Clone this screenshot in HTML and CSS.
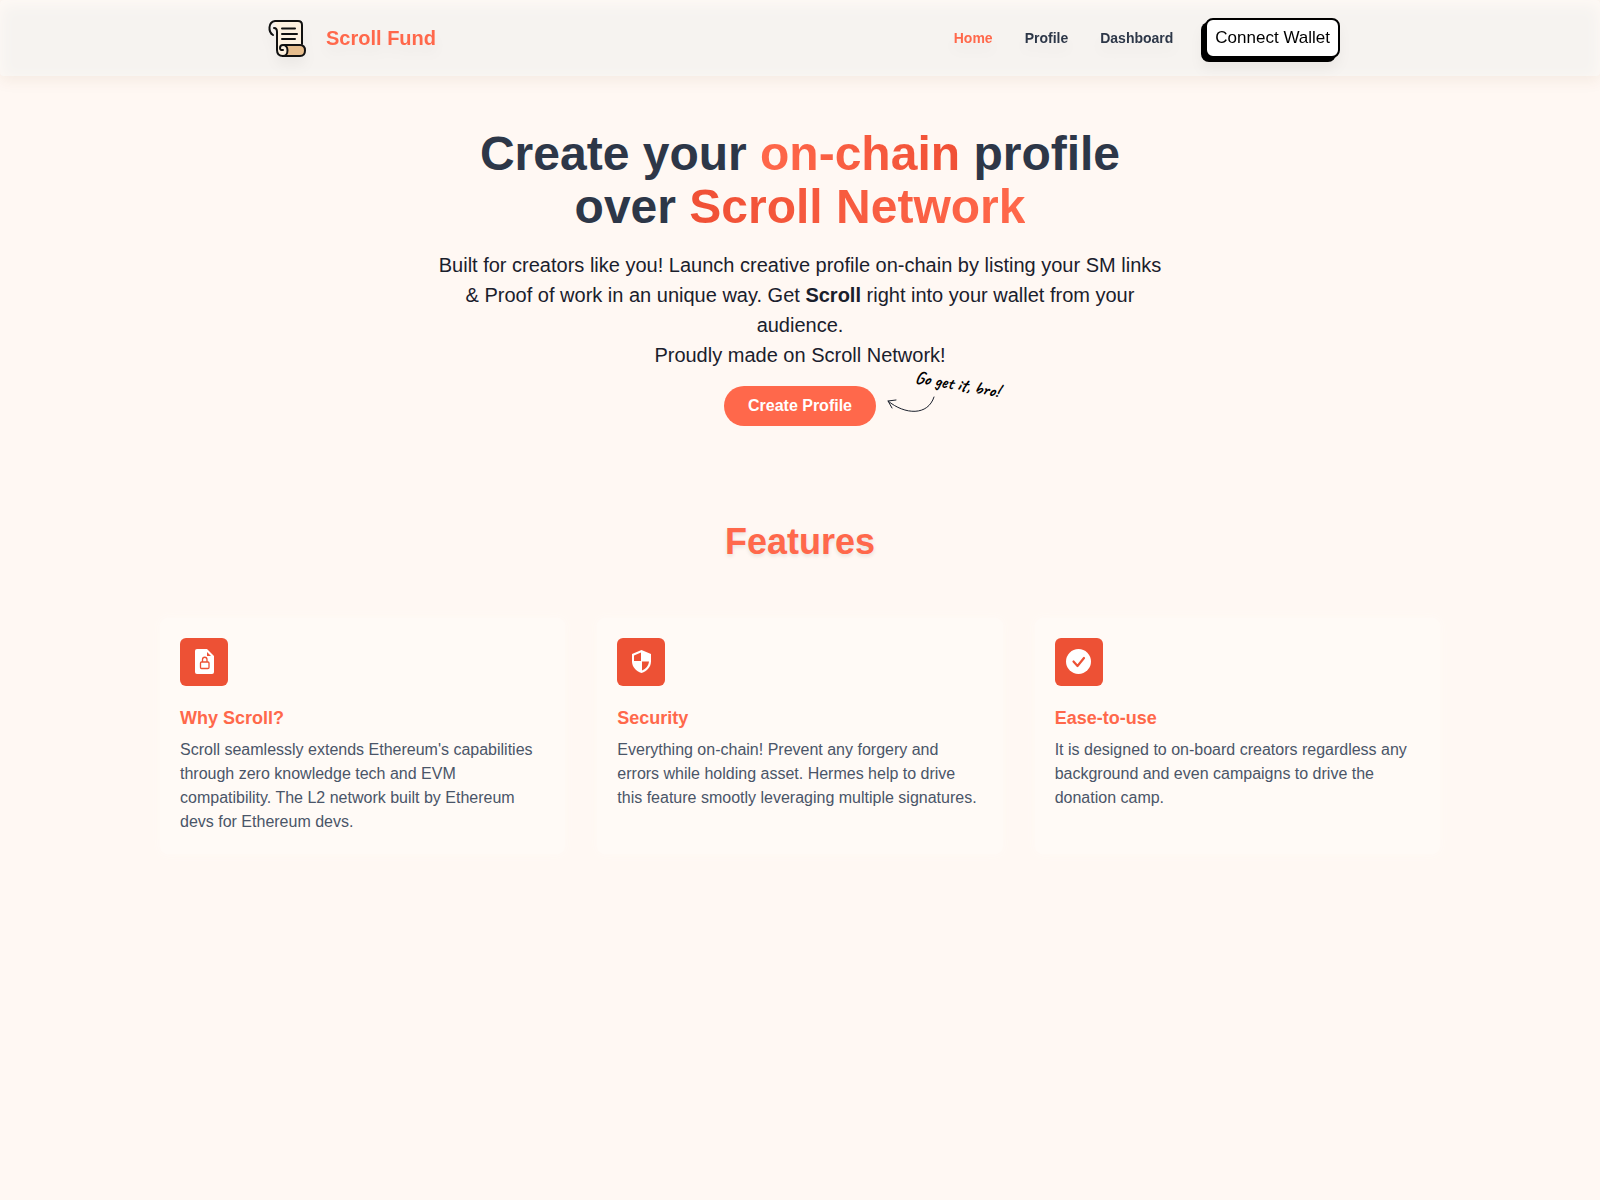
FILE: index.html
```
<!DOCTYPE html>
<html lang="en">
<head>
    <meta charset="UTF-8">
    <meta name="viewport" content="width=device-width, initial-scale=1.0">
    <title>Scroll Fund</title>
    <link rel="stylesheet" href="styles.css">
</head>
<body>
    <header class="header">
        <div class="header-inner">
            <a href="#" class="brand">
                <svg class="logo" viewBox="0 0 50 50" fill="none" stroke="#111" stroke-width="2" stroke-linecap="round" stroke-linejoin="round" aria-hidden="true">
                    <path d="M14 8h24q4 0 4 4v20H27l-4 10q-6 0-6-6V16z" fill="#fdf1e0" stroke="none"/>
                    <path d="M13 22c-5-3-5-13 2-14h23q4 0 4 4v19"/>
                    <path d="M14 15q3 0 3 4v18q0 6 6 6"/>
                    <path d="M24 32h16q5 0 5 5.500t-5 5.500H23q4-1 4-5 0-5-3-6z" fill="#e6bd8d"/>
                    <path d="M23 43c6 0 6-11 0-11-4 0-4 6 0 5" fill="#fdf1e0"/>
                    <path d="M22 15.500h13M22 21h15M22 26h13"/>
                </svg>
                <span>Scroll Fund</span>
            </a>
            <nav class="nav">
                <a href="#" class="nav-link active">Home</a>
                <a href="#" class="nav-link">Profile</a>
                <a href="#" class="nav-link">Dashboard</a>
                <button class="connect-button">Connect Wallet</button>
            </nav>
        </div>
    </header>

    <main>
        <section class="hero">
            <h1>Create your <span class="highlight">on-chain</span> profile<br>over <span class="highlight reverse">Scroll Network</span></h1>
            <p>Built for creators like you! Launch creative profile on-chain by listing your SM links &amp; Proof of work in an unique way. Get <b>Scroll</b> right into your wallet from your audience.<br>Proudly made on Scroll Network!</p>
            <div class="cta">
                <button class="create-button">Create Profile</button>
                <div class="hint">
                    <svg class="arrow" viewBox="0 0 48 18" fill="none" stroke="#1a202c" stroke-linecap="round" aria-hidden="true">
                        <path d="M47 1C41 20 18 19 1 5M9 4L1 5l4 7"/>
                    </svg>
                    <span class="hint-text">Go get it, bro!</span>
                </div>
            </div>
        </section>

        <section class="features">
            <h2>Features</h2>
            <div class="cards">
                <article class="card">
                    <div class="card-icon">
                        <svg viewBox="0 0 28 28" aria-hidden="true">
                            <path fill="#fff" d="M7 1h10l7 7v16a2 2 0 0 1-2 2H7a2 2 0 0 1-2-2V3a2 2 0 0 1 2-2z"/>
                            <path fill="#ed5135" d="M17 4v4h4z"/>
                            <rect x="10.500" y="14" width="8.500" height="6.500" rx="1" fill="none" stroke="#ed5135" stroke-width="1.300"/>
                            <path d="M12.500 14v-2.500a2.250 2.250 0 0 1 4.500 0V14" fill="none" stroke="#ed5135" stroke-width="1.300"/>
                        </svg>
                    </div>
                    <h3>Why Scroll?</h3>
                    <p>Scroll seamlessly extends Ethereum's capabilities through zero knowledge tech and EVM compatibility. The L2 network built by Ethereum devs for Ethereum devs.</p>
                </article>
                <article class="card">
                    <div class="card-icon">
                        <svg viewBox="0 0 28 28" aria-hidden="true">
                            <path fill="#fff" d="M14.500 2L24 6v7.500c0 5-4 10-9.500 11.500C9 23.500 5 18.500 5 13.500V6z"/>
                            <path fill="#ed5135" d="M14 4.500V13H7V7.500zM15 13.500h7c-.500 4-3 7.500-7 9z"/>
                        </svg>
                    </div>
                    <h3>Security</h3>
                    <p>Everything on-chain! Prevent any forgery and errors while holding asset. Hermes help to drive this feature smootly leveraging multiple signatures.</p>
                </article>
                <article class="card">
                    <div class="card-icon">
                        <svg viewBox="0 0 28 28" aria-hidden="true">
                            <circle cx="13.500" cy="13.500" r="12.500" fill="#fff"/>
                            <path d="M8.500 13.500l4 4.500L19 10" fill="none" stroke="#ed5135" stroke-width="2.200" stroke-linecap="round" stroke-linejoin="round"/>
                        </svg>
                    </div>
                    <h3>Ease-to-use</h3>
                    <p>It is designed to on-board creators regardless any background and even campaigns to drive the donation camp.</p>
                </article>
            </div>
        </section>
    </main>
</body>
</html>
```
FILE: styles.css
```
* {
    box-sizing: border-box;
}
body {
    margin: 0;
    font-family: "Liberation Sans", Arial, sans-serif;
    font-size: 16px;
    line-height: 24px;
    background-color: #fff8f3;
    color: #1a202c;
}
h1, h2, h3, p {
    margin: 0;
}
a {
    text-decoration: none;
}
button {
    font-family: inherit;
    font-size: 16px;
    cursor: pointer;
}
.header {
    padding: 13px 20px;
    border-radius: 4px;
    background-color: #f6f3f0;
    box-shadow: 0 4px 16px rgba(120, 60, 30, 0.08), inset 0 4px 16px #fffaf6;
}
.header-inner {
    display: flex;
    justify-content: space-between;
    align-items: center;
    max-width: 1080px;
    margin: 0 auto;
    filter: drop-shadow(0 8px 6px rgba(0, 0, 0, 0.04));
}
.brand {
    display: flex;
    align-items: center;
    gap: 16px;
    font-size: 20px;
    font-weight: bold;
    color: #ff684b;
}
.logo {
    width: 50px;
    height: 50px;
}
.nav {
    display: flex;
    align-items: center;
    gap: 32px;
}
.nav-link {
    font-size: 14px;
    font-weight: bold;
    color: #2d3748;
}
.nav-link.active {
    color: #ff684b;
}
.connect-button {
    height: 40px;
    padding: 0 8px;
    border: 2px solid #000;
    border-radius: 8px;
    background-color: #fff;
    color: #000;
    font-size: 17px;
    box-shadow: -4px 4px 0 #000;
}
.hero {
    display: flex;
    flex-direction: column;
    align-items: center;
    max-width: 768px;
    margin: 0 auto;
    padding: 51px 20px 80px;
    text-align: center;
}
.hero h1 {
    font-size: 48px;
    line-height: 53px;
    color: #2d3748;
}
.highlight {
    background: linear-gradient(to right, #ff684b, #f05035);
    -webkit-background-clip: text;
    background-clip: text;
    color: transparent;
}
.highlight.reverse {
    background-image: linear-gradient(to left, #ff684b, #f05035);
}
.hero p {
    margin-top: 17px;
    font-size: 20px;
    line-height: 30px;
}
.cta {
    position: relative;
    margin-top: 16px;
}
.create-button {
    display: block;
    height: 40px;
    padding: 0 24px;
    border: none;
    border-radius: 20px;
    background-color: #ff684b;
    color: #fff;
    font-weight: bold;
}
.create-button:hover {
    background-color: #f05035;
}
/* handwritten note next to the button */
.hint {
    position: absolute;
    left: 163px;
    top: 10px;
}
.arrow {
    display: block;
    width: 48px;
    height: 18px;
}
.hint-text {
    position: absolute;
    left: 28px;
    top: -24px;
    font-family: Caveat, cursive;
    font-size: 18px;
    font-weight: bold;
    line-height: 24px;
    white-space: nowrap;
    color: #000;
    transform: rotate(10deg);
}
.features {
    max-width: 1320px;
    margin: 0 auto;
    padding: 9px 20px;
}
.features h2 {
    font-size: 36px;
    line-height: 54px;
    text-align: center;
    color: #ff684b;
    text-shadow: 0 2px 4px rgba(0, 0, 0, 0.1);
}
.cards {
    display: grid;
    grid-template-columns: repeat(3, 1fr);
    gap: 32px;
    margin-top: 49px;
}
.card {
    padding: 20px;
    border-radius: 8px;
    background-color: #fffaf6;
    box-shadow: 0 0 10px #fffaf6;
}
.card-icon {
    display: flex;
    justify-content: center;
    align-items: center;
    width: 48px;
    height: 48px;
    border-radius: 6px;
    background-color: #ed5135;
}
.card-icon svg {
    width: 28px;
    height: 28px;
}
.card h3 {
    margin-top: 20px;
    font-size: 18px;
    line-height: 24px;
    color: #ff684b;
}
.card p {
    margin-top: 8px;
    color: #4a5568;
}
@media (max-width: 800px) {
    .header-inner, .nav {
        flex-wrap: wrap;
        gap: 16px;
    }
    .cards {
        grid-template-columns: 1fr;
    }
}
```
